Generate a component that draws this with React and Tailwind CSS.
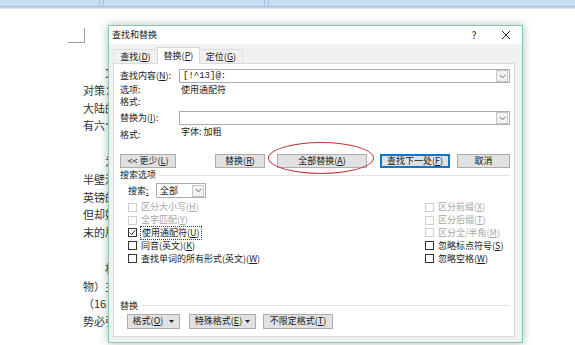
import React from 'react';

// ── Helpers ───────────────────────────────────────────────────────────────────
const U = ({ c }) => <span className="underline underline-offset-1">{c}</span>;

const Chevron = ({ color = '#555' }) => (
  <svg width="7" height="5" viewBox="0 0 7 5" fill="none">
    <path d="M0.8 1 L3.5 3.8 L6.2 1" stroke={color} strokeWidth="1" />
  </svg>
);

const Caret = () => (
  <svg width="5" height="3" viewBox="0 0 5 3" className="ml-[3px]">
    <path d="M0 0 L5 0 L2.5 3 Z" fill="#222" />
  </svg>
);

const ArrowBox = () => (
  <div className="w-[12px] h-[12px] mr-px border border-[#c6c6c6] bg-[#f2f2f2] flex items-center justify-center">
    <Chevron color="#6a6a6a" />
  </div>
);

const Btn = ({ className = '', focus, children }) => (
  <div
    className={`h-full flex items-center justify-center bg-[#e1e1e1] border ${
      focus ? 'border-[#0078d7] outline outline-1 outline-[#0078d7] -outline-offset-2' : 'border-[#adadad]'
    } ${className}`}
  >
    <span className="flex items-center">{children}</span>
  </div>
);

const Check = ({ label, disabled, checked, focus }) => (
  <div className={`h-[12.8px] flex items-center gap-[4px] ${disabled ? 'text-[#a6a6a6]' : 'text-[#1a1a1a]'}`}>
    <div
      className={`w-[9px] h-[9px] border bg-white flex items-center justify-center ${
        disabled ? 'border-[#cfcfcf]' : 'border-[#333]'
      }`}
    >
      {checked && (
        <svg width="7" height="7" viewBox="0 0 7 7" fill="none">
          <path d="M0.8 3.6 L2.7 5.5 L6.3 1.2" stroke="#222" strokeWidth="1" />
        </svg>
      )}
    </div>
    <span className={focus ? 'outline outline-1 outline-dotted outline-[#444] px-px' : ''}>{label}</span>
  </div>
);

// ── Document behind the dialog (only the edge that shows is written) ────────
const docLines = [
  { indent: true, text: '文' },
  { text: '对策：' },
  { text: '大陆的' },
  { text: '有六个' },
  { text: '' },
  { indent: true, text: '为' },
  { text: '半壁江' },
  { text: '英镑的' },
  { text: '但却始' },
  { text: '末的局' },
  { text: '' },
  { indent: true, text: '村' },
  { text: '物）主' },
  { text: '（16' },
  { text: '势必引' },
];

const TopBar = () => (
  <div className="h-[9px] flex flex-col">
    <div className="h-[6px] flex bg-[#cadcf0]">
      <div className="w-[100px] border-r border-[#a9c1df]" />
      <div className="w-[3px]" />
      <div className="w-[162px] border-l border-r border-[#a9c1df]" />
      <div className="w-[3px]" />
      <div className="flex-1 border-l border-[#a9c1df]" />
    </div>
    <div className="h-[3px] bg-gradient-to-b from-[#9cbbe0] to-[#e4edf8]" />
  </div>
);

// ── Dialog ────────────────────────────────────────────────────────────────────
const Dialog = () => (
  <div className="absolute left-[108px] top-[25px] w-[415px] h-[318px] border border-[#86c9a8] bg-[#f0f0f0] shadow-[0_0_9px_rgba(0,0,0,0.28)] flex flex-col text-[9px] leading-[12px] text-[#1a1a1a]">
    {/* Title bar */}
    <div className="h-[18px] bg-white flex items-center pl-[3px]">
      <span className="flex-1">查找和替换</span>
      <span className="w-[10px] text-center text-[10px] mr-[22px]">?</span>
      <svg width="10" height="10" viewBox="0 0 10 10" className="mr-[11px]">
        <path d="M1 1 L9 9 M9 1 L1 9" stroke="#222" strokeWidth="1" />
      </svg>
    </div>

    {/* Tabs */}
    <div className="h-[19px] flex items-end pl-[4px] relative z-10">
      <div className="w-[44px] h-[14px] flex items-center justify-center border-t border-l border-[#e0e0e0]">
        查找(<U c="D" />)
      </div>
      <div className="w-[43px] h-[17px] -mb-px flex items-center justify-center bg-white border-t border-l border-r border-[#d6d6d6]">
        替换(<U c="P" />)
      </div>
      <div className="w-[43px] h-[14px] flex items-center justify-center border-t border-r border-[#e0e0e0]">
        定位(<U c="G" />)
      </div>
    </div>

    {/* Panel */}
    <div className="flex-1 ml-[4px] mr-[7px] mb-[5px] bg-white border border-[#dadada] flex flex-col pt-[5px] relative">
      {/* Find */}
      <div className="h-[14px] flex items-center">
        <span className="w-[65px] pl-[6px]">查找内容(<U c="N" />):</span>
        <div className="flex-1 h-full mr-[4px] border border-[#abadb3] flex items-center">
          <span className="flex-1 pl-[3px] font-['Liberation_Mono','Noto_Sans_CJK_SC',monospace] text-[9px]">[!^13]@:</span>
          <ArrowBox />
        </div>
      </div>
      <div className="h-[12px] mt-[1px] flex items-center">
        <span className="w-[67px] pl-[6px]">选项:</span>
        <span>使用通配符</span>
      </div>
      <div className="h-[12px] flex items-center pl-[6px]">格式:</div>

      {/* Replace */}
      <div className="h-[14px] mt-[3px] flex items-center">
        <span className="w-[65px] pl-[6px]">替换为(<U c="I" />):</span>
        <div className="flex-1 h-full mr-[4px] border border-[#abadb3] flex items-center justify-end">
          <ArrowBox />
        </div>
      </div>
      <div className="h-[16px] flex items-start">
        <span className="w-[67px] pl-[6px] pt-[4px]">格式:</span>
        <span className="pt-[1px]">字体: 加粗</span>
      </div>

      {/* Buttons */}
      <div className="h-[14px] mt-[13px] flex">
        <Btn className="ml-[6px] w-[56px]">&lt;&lt; 更少(<U c="L" />)</Btn>
        <Btn className="ml-[39px] w-[50px]">替换(<U c="R" />)</Btn>
        <Btn className="ml-[12px] w-[90px]">全部替换(<U c="A" />)</Btn>
        <Btn focus className="ml-[13px] w-[70px]">查找下一处(<U c="F" />)</Btn>
        <Btn className="ml-[7px] w-[53px]">取消</Btn>
      </div>

      {/* Search options */}
      <div className="h-[14px] flex items-center pl-[6px] pr-[4px]">
        <span>搜索选项</span>
        <div className="flex-1 h-px bg-[#e2e2e2] ml-[3px]" />
      </div>
      <div className="h-[15px] mt-px flex items-center pl-[14px]">
        <span className="w-[28px]">搜索<U c=":" /></span>
        <div className="w-[50px] h-full border border-[#abadb3] flex items-center">
          <span className="flex-1 pl-[3px]">全部</span>
          <ArrowBox />
        </div>
      </div>
      <div className="mt-[3px] flex pl-[14px]">
        <div className="w-[297px] flex flex-col">
          <Check disabled label={<>区分大小写(<U c="H" />)</>} />
          <Check disabled label={<>全字匹配(<U c="Y" />)</>} />
          <Check checked focus label={<>使用通配符(<U c="U" />)</>} />
          <Check label={<>同音(英文)(<U c="K" />)</>} />
          <Check label={<>查找单词的所有形式(英文)(<U c="W" />)</>} />
        </div>
        <div className="flex flex-col">
          <Check disabled label={<>区分前缀(<U c="X" />)</>} />
          <Check disabled label={<>区分后缀(<U c="T" />)</>} />
          <Check disabled label={<>区分全/半角(<U c="M" />)</>} />
          <Check label={<>忽略标点符号(<U c="S" />)</>} />
          <Check label={<>忽略空格(<U c="W" />)</>} />
        </div>
      </div>

      {/* Replace section */}
      <div className="h-[12px] mt-[35px] flex items-center pl-[6px] pr-[4px]">
        <span>替换</span>
        <div className="flex-1 h-px bg-[#e2e2e2] ml-[3px]" />
      </div>
      <div className="h-[15px] mt-[2px] flex">
        <Btn className="ml-[13px] w-[53px]">格式(<U c="O" />)<span className="w-[3px]" /><Caret /></Btn>
        <Btn className="ml-[9px] w-[67px]">特殊格式(<U c="E" />)<Caret /></Btn>
        <Btn className="ml-[7px] w-[70px]">不限定格式(<U c="T" />)</Btn>
      </div>
    </div>

    {/* Red annotation ellipse around 全部替换 */}
    <div className="absolute left-[159px] top-[116px] w-[106px] h-[32px] rounded-[50%] border-[1.5px] border-[#c2373d]" />
  </div>
);

export default function App() {
  return (
    <div className="relative w-[575px] h-[345px] overflow-hidden bg-white font-['Noto_Sans_CJK_SC','Noto_Sans',sans-serif]">
      <TopBar />
      <div className="flex flex-col">
        {/* page corner mark */}
        <div className="ml-[68px] mt-[19px] w-[17px] h-[15px] border-r border-b border-[#9a9a9a]" />
        <div className="mt-[21px] flex flex-col text-[11px] leading-[17.8px] text-[#333]">
          {docLines.map((l, i) => (
            <div key={i} className={`h-[17.8px] whitespace-nowrap ${l.indent ? 'pl-[105px]' : 'pl-[83px]'}`}>
              {l.text}
            </div>
          ))}
        </div>
      </div>
      <Dialog />
    </div>
  );
}
